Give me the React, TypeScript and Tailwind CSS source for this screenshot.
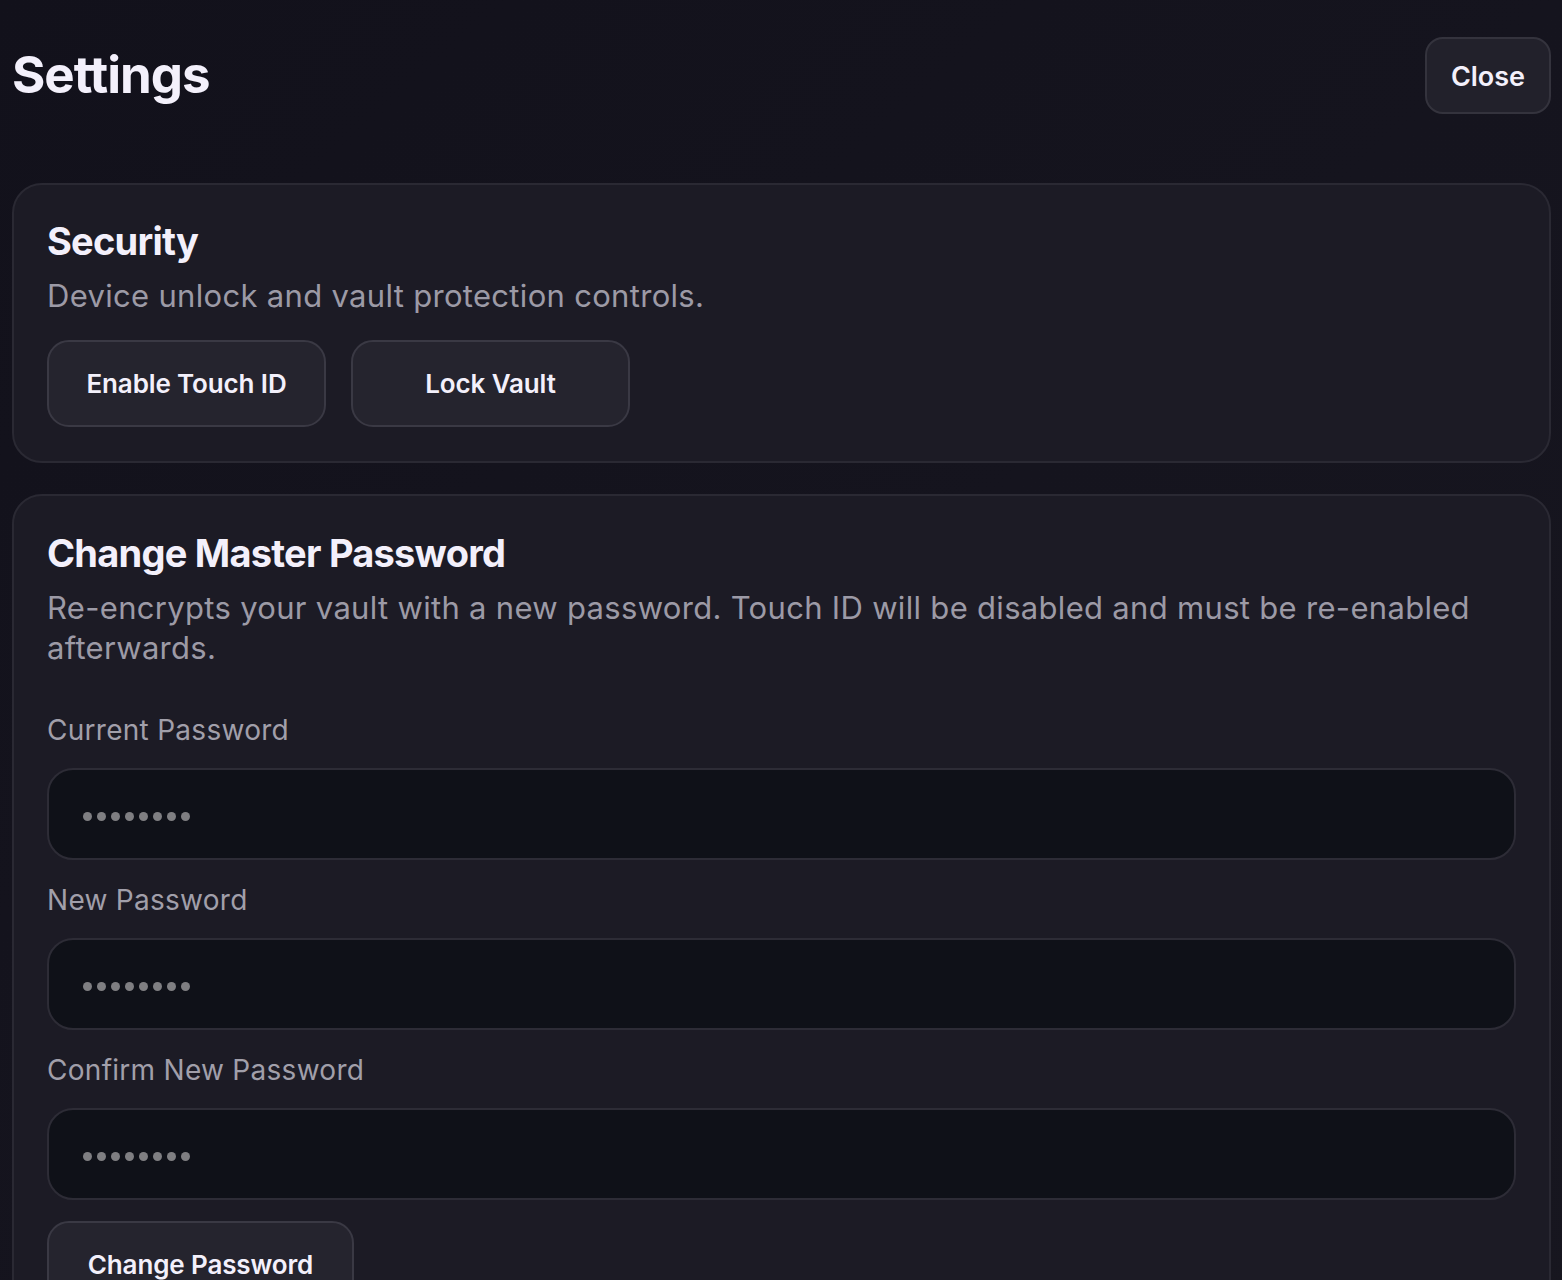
import React from "react";

const font = { fontFamily: "Inter, 'Noto Sans', sans-serif" };

function Field({ label }: { label: string }) {
  return (
    <div className="flex flex-col">
      <label className="text-[28px] leading-[40px] text-[#a19faa] tracking-[0.01em]">{label}</label>
      <div className="mt-[18px] h-[92px] rounded-[26px] border-2 border-[#2d2c36] bg-[#0f1118] flex items-center pl-[34px] pt-[5px]">
        <div className="flex gap-[5px]" aria-label="password">
          {Array.from({ length: 8 }).map((_, i) => (
            <span key={i} className="block w-[9px] h-[9px] rounded-full bg-[#7f7f82]" />
          ))}
        </div>
      </div>
    </div>
  );
}

export default function App() {
  return (
    <div style={font} className="min-h-screen bg-gradient-to-br from-[#12111b] via-[#15141e] to-[#17161f] text-[#f3f0fb] pl-[12px] pr-[11px] pt-[37px] pb-[40px]">
      <div className="flex items-start justify-between">
        <h1 className="text-[51px] leading-[78px] font-bold tracking-[-0.02em] -mt-[1px]">Settings</h1>
        <button className="h-[77px] w-[126px] rounded-[18px] border-2 border-[#34333d] bg-[#22212b] text-[27px] font-semibold text-[#f3f0fb] pt-[3px]">
          Close
        </button>
      </div>

      <section className="mt-[69px] rounded-[30px] border-2 border-[#2a2933] bg-[#1c1b25] px-[33px] pt-[31px] pb-[34px]">
        <h2 className="text-[38px] leading-[50px] font-bold tracking-[-0.02em]">Security</h2>
        <p className="mt-[10px] text-[31px] leading-[40px] text-[#9c9aa6] tracking-[0.01em]">
          Device unlock and vault protection controls.
        </p>
        <div className="mt-[24px] flex gap-[25px]">
          <button className="h-[87px] w-[279px] rounded-[22px] border-2 border-[#3a3944] bg-[#25242e] text-[26px] font-semibold tracking-[-0.005em] text-[#f3f0fb]">
            Enable Touch ID
          </button>
          <button className="h-[87px] w-[279px] rounded-[22px] border-2 border-[#3a3944] bg-[#25242e] text-[26px] font-semibold tracking-[-0.005em] text-[#f3f0fb]">
            Lock Vault
          </button>
        </div>
      </section>

      <section className="mt-[31px] rounded-[30px] border-2 border-[#2a2933] bg-[#1c1b25] px-[33px] pt-[32px] pb-[40px]">
        <h2 className="text-[38px] leading-[50px] font-bold tracking-[-0.02em]">Change Master Password</h2>
        <p className="mt-[10px] text-[31px] leading-[40px] text-[#9c9aa6] tracking-[0.01em] pr-[40px]">
          Re-encrypts your vault with a new password. Touch ID will be disabled and must be re-enabled afterwards.
        </p>
        <div className="mt-[42px] flex flex-col gap-[20px]">
          <Field label="Current Password" />
          <Field label="New Password" />
          <Field label="Confirm New Password" />
        </div>
        <button className="mt-[21px] h-[87px] w-[307px] rounded-[22px] border-2 border-[#3a3944] bg-[#25242e] text-[26px] font-semibold tracking-[-0.005em] text-[#f3f0fb]">
          Change Password
        </button>
      </section>
    </div>
  );
}
